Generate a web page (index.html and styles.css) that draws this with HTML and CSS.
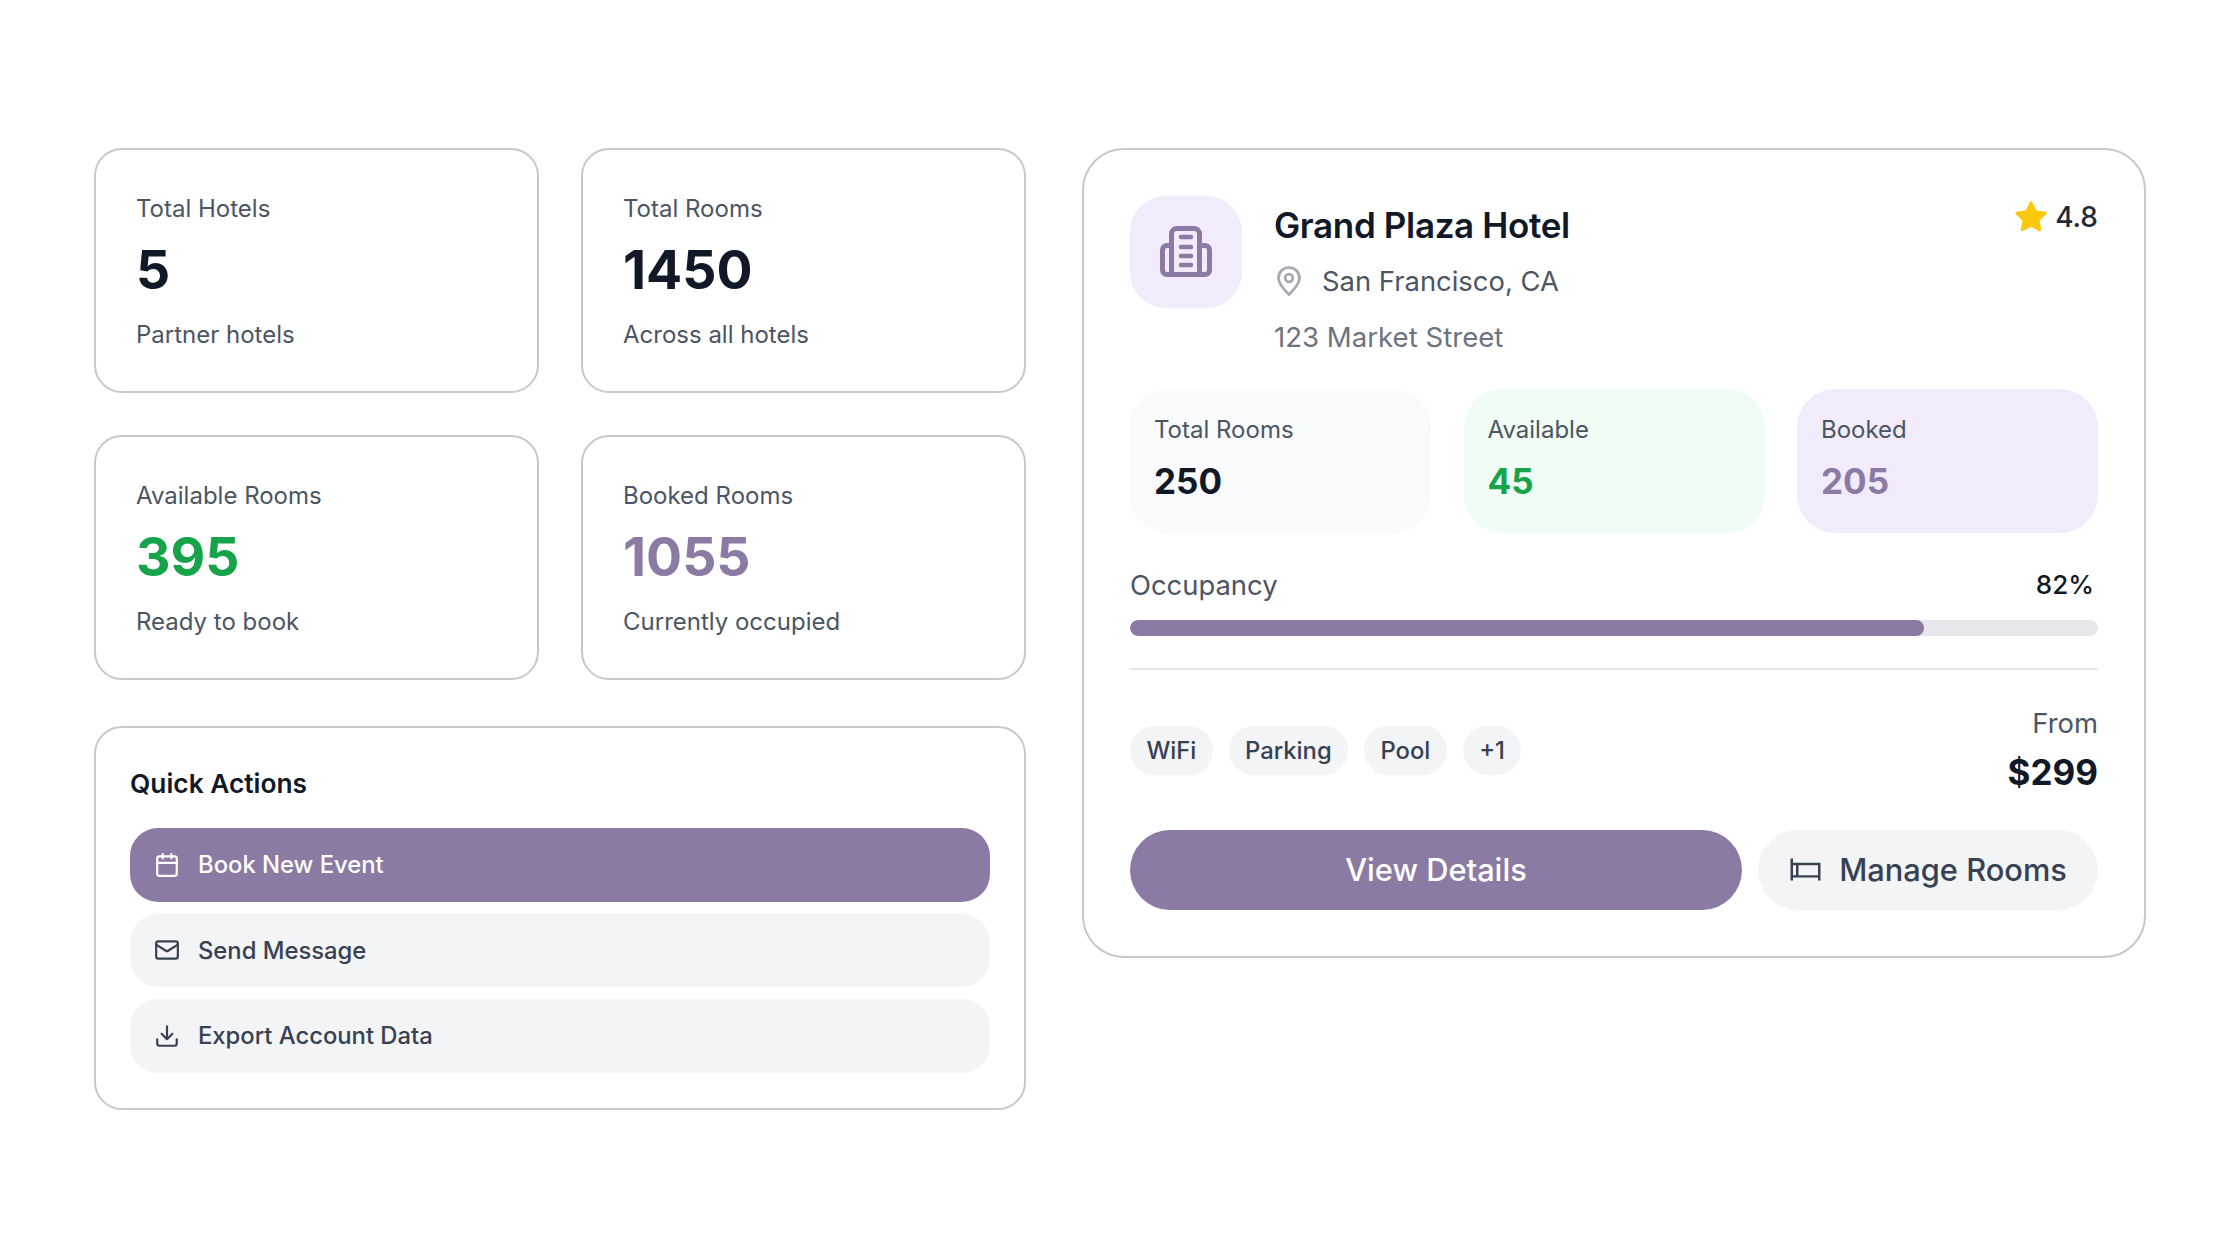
FILE: index.html
```html
<!DOCTYPE html>
<html lang="en">
<head>
    <meta charset="UTF-8">
    <title>Hotels Dashboard</title>
    <link rel="stylesheet" href="styles.css">
</head>
<body>
    <div class="page">
        <div class="left-col">
            <div class="stats-grid">
                <div class="stat-card">
                    <div class="stat-label">Total Hotels</div>
                    <div class="stat-value">5</div>
                    <div class="stat-note">Partner hotels</div>
                </div>
                <div class="stat-card">
                    <div class="stat-label">Total Rooms</div>
                    <div class="stat-value">1450</div>
                    <div class="stat-note">Across all hotels</div>
                </div>
                <div class="stat-card">
                    <div class="stat-label">Available Rooms</div>
                    <div class="stat-value green">395</div>
                    <div class="stat-note">Ready to book</div>
                </div>
                <div class="stat-card">
                    <div class="stat-label">Booked Rooms</div>
                    <div class="stat-value purple">1055</div>
                    <div class="stat-note">Currently occupied</div>
                </div>
            </div>

            <div class="actions-card">
                <h2>Quick Actions</h2>
                <div class="action-list">
                    <button class="action primary">
                        <svg class="action-icon" viewBox="0 0 24 24"><rect x="3" y="4" width="18" height="18" rx="2"/><path d="M16 2v4M8 2v4M3 10h18"/></svg>
                        Book New Event
                    </button>
                    <button class="action">
                        <svg class="action-icon" viewBox="0 0 24 24"><rect x="2" y="4" width="20" height="16" rx="2"/><path d="M22 7l-8.970 5.700a1.940 1.940 0 0 1-2.060 0L2 7"/></svg>
                        Send Message
                    </button>
                    <button class="action">
                        <svg class="action-icon" viewBox="0 0 24 24"><path d="M21 15v4a2 2 0 0 1-2 2H5a2 2 0 0 1-2-2v-4"/><path d="M7 10l5 5 5-5M12 15V3"/></svg>
                        Export Account Data
                    </button>
                </div>
            </div>
        </div>

        <div class="hotel-card">
            <div class="hotel-head">
                <div class="hotel-icon">
                    <svg viewBox="0 0 52 52"><path d="M11.500 48.500V8a5.500 5.500 0 0 1 5.500-5.500h17A5.500 5.500 0 0 1 39.500 8v40.500"/><path d="M11.500 19.500H7A4.500 4.500 0 0 0 2.500 24v20A4.500 4.500 0 0 0 7 48.500h38a4.500 4.500 0 0 0 4.500-4.500V24a4.500 4.500 0 0 0-4.500-4.500h-5.500"/><path class="hotel-bars" d="M21 11h10M21 21h10M21 30h10M21 39h10"/></svg>
                </div>
                <div class="hotel-info">
                    <h1>Grand Plaza Hotel</h1>
                    <div class="hotel-city">
                        <svg class="pin" viewBox="0 0 24 30"><path d="M12 28.500C6 22 1.500 17.500 1.500 12a10.500 10.500 0 0 1 21 0c0 5.500-4.500 10-10.500 16.500z"/><circle cx="12" cy="12" r="3.800"/></svg>
                        San Francisco, CA
                    </div>
                    <div class="hotel-street">123 Market Street</div>
                </div>
                <div class="rating">
                    <svg viewBox="0 0 24 24"><path d="M12 2l3.090 6.260L22 9.270l-5 4.870 1.180 6.880L12 17.770l-6.180 3.250L7 14.140 2 9.270l6.910-1.010z"/></svg>
                    4.8
                </div>
            </div>

            <div class="room-stats">
                <div class="room-box">
                    <div class="room-label">Total Rooms</div>
                    <div class="room-value">250</div>
                </div>
                <div class="room-box box-green">
                    <div class="room-label">Available</div>
                    <div class="room-value green">45</div>
                </div>
                <div class="room-box box-purple">
                    <div class="room-label">Booked</div>
                    <div class="room-value purple">205</div>
                </div>
            </div>

            <div class="occupancy">
                <div class="occupancy-row">
                    <span class="occupancy-label">Occupancy</span>
                    <span class="occupancy-value">82%</span>
                </div>
                <div class="bar"><div class="bar-fill" style="width: 82%"></div></div>
            </div>

            <div class="hotel-foot">
                <div class="tags">
                    <span class="tag">WiFi</span>
                    <span class="tag">Parking</span>
                    <span class="tag">Pool</span>
                    <span class="tag">+1</span>
                </div>
                <div class="price">
                    <div class="price-from">From</div>
                    <div class="price-value">$299</div>
                </div>
            </div>

            <div class="hotel-buttons">
                <button class="btn btn-primary">View Details</button>
                <button class="btn btn-light">
                    <svg class="bed" viewBox="0 0 24 24"><path d="M2 4v16M2 8h20v12M2 17h20M6 8v9"/></svg>
                    Manage Rooms
                </button>
            </div>
        </div>
    </div>
</body>
</html>
```

FILE: styles.css
```css
* {
    margin: 0;
    padding: 0;
    box-sizing: border-box;
}

body {
    font-family: 'Inter', sans-serif;
    background-color: #fff;
    color: #111827;
}

.page {
    display: flex;
    align-items: flex-start;
    gap: 56px;
    padding: 148px 94px 0;
}

.left-col {
    width: 932px;
    flex-shrink: 0;
    display: flex;
    flex-direction: column;
    gap: 46px;
}

.stats-grid {
    display: grid;
    grid-template-columns: 1fr 1fr;
    gap: 42px;
}

.stat-card {
    height: 245px;
    padding: 41px 40px;
    border: 2px solid #c8c8c8;
    border-radius: 28px;
}

.stat-label,
.stat-note {
    font-size: 24px;
    line-height: 35px;
    color: #4b5563;
}

.stat-value {
    font-size: 53.500px;
    line-height: 70px;
    font-weight: 700;
    margin: 8.500px 0 12px;
}

.green { color: #16a34a; }
.purple { color: #8b7aa3; }

.actions-card {
    height: 384px;
    padding: 37px 34px;
    border: 2px solid #c8c8c8;
    border-radius: 28px;
}

.actions-card h2 {
    font-size: 26.300px;
    line-height: 38px;
    font-weight: 600;
    margin-bottom: 25px;
}

.action-list {
    display: flex;
    flex-direction: column;
    gap: 12px;
}

.action {
    display: flex;
    align-items: center;
    gap: 18px;
    width: 100%;
    height: 73.500px;
    padding: 0 24px;
    border: none;
    border-radius: 28px;
    font-family: inherit;
    font-size: 23.800px;
    font-weight: 500;
    background-color: #f3f4f6;
    color: #374151;
}

.action.primary {
    background-color: #8b7aa3;
    color: #fff;
}

.action-icon {
    width: 26px;
    height: 26px;
    fill: none;
    stroke: currentColor;
    stroke-width: 2;
    stroke-linecap: round;
    stroke-linejoin: round;
}

.hotel-card {
    width: 1064px;
    height: 810px;
    padding: 46px;
    border: 2px solid #c8c8c8;
    border-radius: 42px;
}

.hotel-head {
    display: flex;
    align-items: flex-start;
    gap: 32px;
    height: 192.500px;
}

.hotel-icon {
    width: 112px;
    height: 112px;
    flex-shrink: 0;
    display: flex;
    align-items: center;
    justify-content: center;
    border-radius: 36px;
    background-color: #f1ebfb;
}

.hotel-icon svg {
    width: 52px;
    height: 52px;
    fill: none;
    stroke: #8b7aa3;
    stroke-width: 5;
    stroke-linecap: round;
    stroke-linejoin: round;
}

.hotel-icon .hotel-bars {
    stroke-width: 4.500;
}

.hotel-info {
    flex: 1;
}

.hotel-info h1 {
    font-size: 35px;
    line-height: 42px;
    font-weight: 600;
    letter-spacing: -0.350px;
    margin: 7.500px 0 14.500px;
}

.hotel-city {
    display: flex;
    align-items: center;
    gap: 21px;
    font-size: 27.400px;
    line-height: 42px;
    color: #4b5563;
}

.pin {
    width: 24px;
    height: 30px;
    margin: -1px 0 0 3px;
    fill: none;
    stroke: #a9a7b3;
    stroke-width: 2.700;
}

.hotel-street {
    font-size: 27.600px;
    line-height: 42px;
    color: #6b7280;
    margin-top: 14px;
}

.rating {
    display: flex;
    align-items: center;
    gap: 7px;
    font-size: 28px;
    font-weight: 500;
    line-height: 42px;
    color: #1f2937;
}

.rating svg {
    width: 34px;
    height: 34px;
    margin-left: 1px;
    fill: #fcc80b;
    stroke: #fcc80b;
    stroke-width: 2;
    stroke-linejoin: round;
}

.room-stats {
    display: grid;
    grid-template-columns: repeat(3, 1fr);
    gap: 32.500px;
}

.room-box {
    height: 144px;
    padding: 23px 24px;
    border-radius: 38px;
    background-color: #f9fafb;
}

.box-green { background-color: #f0fdf4; }
.box-purple { background-color: #f1ebfb; }

.room-label {
    font-size: 24px;
    line-height: 35px;
    color: #4b5563;
}

.room-value {
    font-size: 35px;
    line-height: 48px;
    font-weight: 700;
    margin-top: 10px;
}

.occupancy {
    margin-top: 31px;
    padding-bottom: 32px;
    border-bottom: 2px solid #e5e7eb;
}

.occupancy-row {
    display: flex;
    justify-content: space-between;
    align-items: center;
    height: 42px;
    font-size: 27.400px;
}

.occupancy-label { color: #4b5563; }

.occupancy-value {
    font-size: 26px;
    font-weight: 500;
    margin-right: 4px;
}

.bar {
    height: 16px;
    margin-top: 14px;
    border-radius: 8px;
    background-color: #e5e7eb;
    overflow: hidden;
}

.bar-fill {
    height: 100%;
    background-color: #8b7aa3;
    border-radius: 8px;
}

.hotel-foot {
    display: flex;
    justify-content: space-between;
    align-items: center;
    margin-top: 32.500px;
}

.tags {
    display: flex;
    gap: 16px;
    margin-top: 4px;
}

.tag {
    height: 49px;
    padding: 0 16.400px;
    display: flex;
    align-items: center;
    border-radius: 25px;
    font-size: 23.800px;
    font-weight: 500;
    background-color: #f3f4f6;
    color: #374151;
}

.price {
    text-align: right;
}

.price-from {
    font-size: 27.400px;
    line-height: 42px;
    color: #4b5563;
}

.price-value {
    font-size: 35px;
    line-height: 48px;
    font-weight: 700;
    margin-top: 3.500px;
}

.hotel-buttons {
    display: flex;
    gap: 16px;
    margin-top: 34px;
}

.btn {
    height: 80px;
    display: flex;
    align-items: center;
    justify-content: center;
    border: none;
    border-radius: 40px;
    font-family: inherit;
    font-size: 30.800px;
    font-weight: 500;
}

.btn-primary {
    flex: 1;
    background-color: #8b7aa3;
    color: #fff;
}

.btn-light {
    width: 340px;
    gap: 17px;
    background-color: #f3f4f6;
    color: #374151;
}

.bed {
    width: 33px;
    height: 33px;
    fill: none;
    stroke: #374151;
    stroke-width: 1.800;
}
```
